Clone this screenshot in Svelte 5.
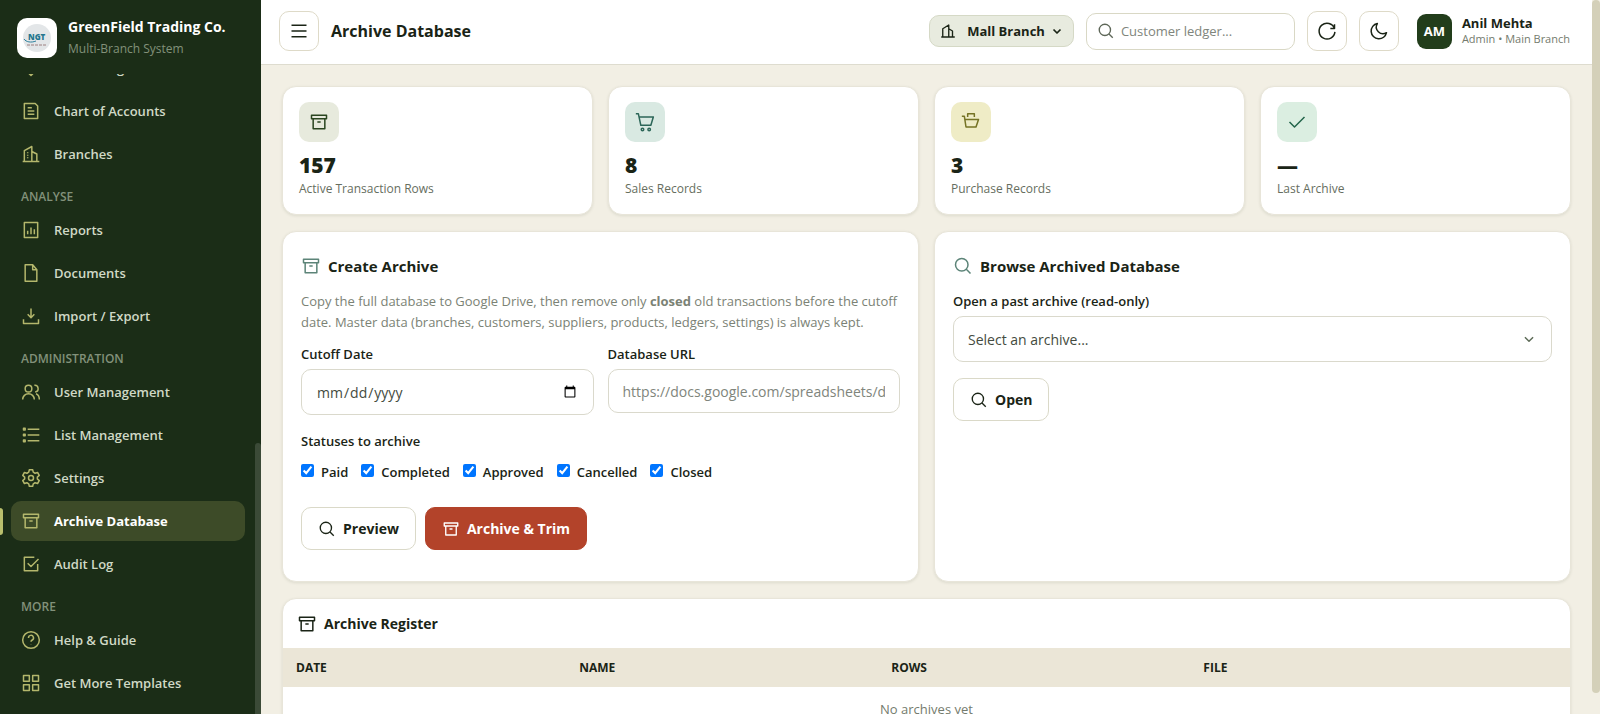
<script lang="ts">
	import { onMount } from 'svelte';

	type NavItem = { label: string; icon: string; active?: boolean };
	type NavGroup = { title?: string; items: NavItem[] };

	// 24x24 line icons, one path string each
	const icons: Record<string, string> = {
		pin: 'M12 21l-6-6a8 8 0 1 1 12 0z',
		article: 'M4 3h13l3 3v15H4zM8 8h5M8 12h8M8 16h8',
		building: 'M2 21h20M4 21V8l9-5v18M13 9l6 3v9M8 10v1M8 13v1M8 16v1',
		chart: 'M4 3h16v18H4zM8 13v4M12 9v8M16 11v6',
		file: 'M5 2h9l5 6v14H5zM14 2v6h5',
		download: 'M12 3v11M8 10l4 4 4-4M3 16v5h18v-5',
		users: 'M9 12a4 4 0 1 0 0-8 4 4 0 0 0 0 8zM2 21a7 7 0 0 1 14 0M16 4a4 4 0 0 1 1 8M18 14c3 1 4 4 4 7',
		list: 'M8 5h14M8 12h14M8 19h14M3 4h2v2H3zM3 11h2v2H3zM3 18h2v2H3z',
		gear: 'M10 2h4l.7 3 2.2 1.3 3-.9 2 3.4-2.3 2.1v2.2l2.3 2.1-2 3.4-3-.9-2.2 1.3-.7 3h-4l-.7-3-2.2-1.3-3 .9-2-3.4 2.3-2.1v-2.2L2.1 8.8l2-3.4 3 .9L9.3 5zM12 15a3 3 0 1 0 0-6 3 3 0 0 0 0 6z',
		archive: 'M3 4h18v4H3zM5 8v12h14V8M10 12h4',
		check: 'M20 12v8H4V4h12M8 11l4 4 9-9',
		help: 'M12 22a10 10 0 1 0 0-20 10 10 0 0 0 0 20zM9 9.5a3 3 0 1 1 4.5 2.5c-1 .6-1.500 1-1.500 2M12 17v.5',
		grid: 'M3 3h7v7H3zM14 3h7v7h-7zM3 14h7v7H3zM14 14h7v7h-7z',
		menu: 'M3 5h18M3 12h18M3 19h18',
		branch: 'M3 20h18M5 20V9l8-5v16M13 9l5 3v8',
		chevron: 'M5 9l7 7 7-7',
		search: 'M10.5 18a7.5 7.5 0 1 0 0-15 7.5 7.5 0 0 0 0 15zM16 16l5 5',
		refresh: 'M21 4v5h-5M21 9a9.5 9.5 0 1 0 .5 4',
		moon: 'M10 3a8 8 0 0 0 11 11A9.3 9.3 0 1 1 10 3z',
		cart: 'M1 2h3l3 14h12l3-10H5M9 19.5a1.5 1.5 0 1 0 0 3 1.5 1.5 0 0 0 0-3M17 19.5a1.5 1.5 0 1 0 0 3 1.5 1.5 0 0 0 0-3',
		basket: 'M1 5h3l2 13h12l3-9H5M8 6V2h8v4',
		tick: 'M3 12l6 6L21 6'
	};

	const groups: NavGroup[] = [
		{
			items: [
				{ label: 'Accounting', icon: 'pin' },
				{ label: 'Chart of Accounts', icon: 'article' },
				{ label: 'Branches', icon: 'building' }
			]
		},
		{
			title: 'Analyse',
			items: [
				{ label: 'Reports', icon: 'chart' },
				{ label: 'Documents', icon: 'file' },
				{ label: 'Import / Export', icon: 'download' }
			]
		},
		{
			title: 'Administration',
			items: [
				{ label: 'User Management', icon: 'users' },
				{ label: 'List Management', icon: 'list' },
				{ label: 'Settings', icon: 'gear' },
				{ label: 'Archive Database', icon: 'archive', active: true },
				{ label: 'Audit Log', icon: 'check' }
			]
		},
		{
			title: 'More',
			items: [
				{ label: 'Help & Guide', icon: 'help' },
				{ label: 'Get More Templates', icon: 'grid' }
			]
		}
	];

	const stats = [
		{ value: '157', label: 'Active Transaction Rows', icon: 'archive', tone: 'olive' },
		{ value: '8', label: 'Sales Records', icon: 'cart', tone: 'teal' },
		{ value: '3', label: 'Purchase Records', icon: 'basket', tone: 'yellow' },
		{ value: '—', label: 'Last Archive', icon: 'tick', tone: 'green' }
	];

	let statuses = $state([
		{ name: 'Paid', on: true },
		{ name: 'Completed', on: true },
		{ name: 'Approved', on: true },
		{ name: 'Cancelled', on: true },
		{ name: 'Closed', on: true }
	]);

	let nav: HTMLElement;

	// keep the lower groups in view, the active page is down there
	onMount(() => {
		nav.scrollTop = nav.scrollHeight;
	});
</script>

{#snippet icon(name: string, size: number)}
	<svg class="icon" width={size} height={size} viewBox="0 0 24 24" aria-hidden="true">
		<path d={icons[name]} />
	</svg>
{/snippet}

<div class="app">
	<aside class="sidebar">
		<div class="brand">
			<svg class="logo" width="40" height="40" viewBox="0 0 40 40" aria-hidden="true">
				<rect width="40" height="40" rx="10" fill="#fff" />
				<circle cx="20" cy="20" r="14" fill="#e3e6e8" />
				<text x="11" y="22">NGT</text>
				<path d="M7 21c2 3 7 4 12 2" fill="none" stroke="#2b7f9b" />
				<path d="M10 27h20" stroke="#8a6464" stroke-width="0.8" stroke-dasharray="3 1" />
			</svg>
			<div>
				<div class="brand-name">GreenField Trading Co.</div>
				<div class="brand-sub">Multi-Branch System</div>
			</div>
		</div>
		<nav bind:this={nav}>
			{#each groups as group}
				{#if group.title}
					<div class="group-title">{group.title}</div>
				{/if}
				{#each group.items as item}
					<a href="#top" class="nav-item" class:active={item.active}>
						{@render icon(item.icon, 20)}
						<span>{item.label}</span>
					</a>
				{/each}
			{/each}
		</nav>
		<div class="nav-thumb"></div>
	</aside>

	<div class="main">
		<header>
			<button class="square-btn" aria-label="Toggle menu">{@render icon('menu', 20)}</button>
			<h1>Archive Database</h1>
			<button class="branch-btn">
				{@render icon('branch', 18)}
				<span>Mall Branch</span>
				{@render icon('chevron', 12)}
			</button>
			<label class="search">
				{@render icon('search', 18)}
				<input type="text" placeholder="Customer ledger..." aria-label="Search" />
			</label>
			<button class="square-btn" aria-label="Refresh">{@render icon('refresh', 20)}</button>
			<button class="square-btn" aria-label="Dark mode">{@render icon('moon', 20)}</button>
			<div class="user">
				<div class="avatar">AM</div>
				<div>
					<div class="user-name">Anil Mehta</div>
					<div class="user-role">Admin • Main Branch</div>
				</div>
			</div>
		</header>

		<main>
			<section class="stats">
				{#each stats as stat}
					<div class="card stat">
						<div class="stat-icon {stat.tone}">{@render icon(stat.icon, 20)}</div>
						<div class="stat-value">{stat.value}</div>
						<div class="stat-label">{stat.label}</div>
					</div>
				{/each}
			</section>

			<section class="panels">
				<div class="card panel">
					<h2>{@render icon('archive', 20)} Create Archive</h2>
					<p>
						Copy the full database to Google Drive, then remove only <strong>closed</strong> old transactions
						before the cutoff date. Master data (branches, customers, suppliers, products, ledgers, settings)
						is always kept.
					</p>
					<div class="fields">
						<div>
							<label class="field-label" for="cutoff">Cutoff Date</label>
							<input id="cutoff" class="field date" type="date" />
						</div>
						<div>
							<label class="field-label" for="url">Database URL</label>
							<input id="url" class="field" type="text" placeholder="https://docs.google.com/spreadsheets/d/..." />
						</div>
					</div>
					<div class="status-title">Statuses to archive</div>
					<div class="statuses">
						{#each statuses as status}
							<label><input type="checkbox" bind:checked={status.on} /> {status.name}</label>
						{/each}
					</div>
					<div class="actions">
						<button class="btn">{@render icon('search', 18)} Preview</button>
						<button class="btn danger">{@render icon('archive', 18)} Archive &amp; Trim</button>
					</div>
				</div>

				<div class="card panel">
					<h2>{@render icon('search', 20)} Browse Archived Database</h2>
					<label class="field-label" for="past">Open a past archive (read-only)</label>
					<div class="select-wrap">
						<select id="past" class="field">
							<option>Select an archive...</option>
						</select>
						{@render icon('chevron', 14)}
					</div>
					<button class="btn">{@render icon('search', 18)} Open</button>
				</div>
			</section>

			<section class="card register">
				<h2>{@render icon('archive', 20)} Archive Register</h2>
				<table>
					<thead>
						<tr><th>Date</th><th>Name</th><th>Rows</th><th>File</th></tr>
					</thead>
					<tbody>
						<tr><td colspan="4">No archives yet</td></tr>
					</tbody>
				</table>
			</section>
		</main>
	</div>
	<div class="page-rail"><div class="page-thumb"></div></div>
</div>

<style>
	:global(body) {
		background: #f2efe4;
	}

	.app {
		display: flex;
		height: 100vh;
		overflow: hidden;
		font-family: 'Segoe UI', 'Open Sans', 'Noto Sans', sans-serif;
		font-size: 14px;
		color: #1a2416;
	}

	.app * {
		box-sizing: border-box;
	}

	button,
	input,
	select {
		font: inherit;
		color: inherit;
	}

	button {
		cursor: pointer;
	}

	.icon {
		flex: none;
		fill: none;
		stroke: currentColor;
		stroke-width: 1.8;
		stroke-linejoin: round;
	}

	/* Sidebar */
	.sidebar {
		position: relative;
		display: flex;
		flex-direction: column;
		flex: none;
		width: 261px;
		background: #1b2d17;
	}

	.brand {
		display: flex;
		align-items: center;
		gap: 11px;
		height: 74px;
		padding: 2px 17px 0;
		flex: none;
	}

	.logo text {
		font-size: 8px;
		font-weight: 800;
		fill: #24768f;
	}

	.brand-name {
		font-size: 14px;
		font-weight: 700;
		line-height: 22px;
		color: #fff;
		white-space: nowrap;
	}

	.brand-sub {
		font-size: 12px;
		line-height: 22px;
		color: #82917a;
	}

	nav {
		position: relative;
		flex: 1;
		min-height: 0;
		overflow-y: auto;
		scrollbar-width: none;
		padding: 0 16px 8px 11px;
	}

	.group-title {
		padding: 11px 10px 4px;
		font-size: 12px;
		line-height: 18px;
		font-weight: 600;
		text-transform: uppercase;
		color: #82917a;
	}

	.nav-item {
		display: flex;
		align-items: center;
		gap: 13px;
		height: 40px;
		margin-bottom: 3px;
		padding: 0 10px;
		border-radius: 10px;
		font-size: 13px;
		font-weight: 600;
		color: #d0d9c6;
		text-decoration: none;
	}

	.nav-item .icon {
		color: #b4b76c;
	}

	.nav-item.active {
		color: #fff;
		font-weight: 700;
		background: #3d4b28;
	}

	.nav-item.active::before {
		content: '';
		position: absolute;
		left: 0;
		width: 3px;
		height: 27px;
		border-radius: 0 3px 3px 0;
		background: #b9bf6d;
	}

	.nav-thumb {
		position: absolute;
		right: 0;
		top: 62%;
		bottom: 0;
		width: 6px;
		border-radius: 3px 3px 0 0;
		background: #3b4a37;
	}

	/* Top bar */
	.main {
		flex: 1;
		min-width: 0;
		display: flex;
		flex-direction: column;
	}

	header {
		display: flex;
		align-items: center;
		gap: 12px;
		flex: none;
		height: 65px;
		padding: 0 22px 2px 18px;
		background: #fff;
		border-bottom: 1px solid #dedccf;
	}

	h1 {
		flex: 1;
		margin: 0;
		font-size: 16px;
		font-weight: 700;
	}

	.square-btn {
		display: grid;
		place-items: center;
		width: 40px;
		height: 40px;
		padding: 0;
		border: 1px solid #dedac8;
		border-radius: 10px;
		background: #fff;
	}

	.branch-btn {
		display: flex;
		align-items: center;
		gap: 6px;
		height: 32px;
		padding: 0 10px 0 9px;
		border: 1px solid #d5d9c6;
		border-radius: 10px;
		background: #e8ebdf;
		font-size: 13px;
		font-weight: 700;
	}

	.branch-btn span {
		margin-left: 4px;
	}

	.branch-btn .icon:last-child {
		stroke-width: 3.5;
	}

	.search {
		display: flex;
		align-items: center;
		gap: 6px;
		width: 209px;
		height: 37px;
		padding: 0 10px;
		border: 1px solid #d9d8c5;
		border-radius: 10px;
		color: #5d6657;
	}

	.search input {
		flex: 1;
		min-width: 0;
		padding: 0;
		border: 0;
		outline: 0;
		font-size: 13px;
		background: none;
	}

	input::placeholder {
		color: #80857c;
	}

	.user {
		display: flex;
		align-items: center;
		gap: 10px;
		margin-left: 6px;
	}

	.avatar {
		display: grid;
		place-items: center;
		width: 35px;
		height: 35px;
		border-radius: 9px;
		background: #223d1b;
		color: #fff;
		font-size: 13px;
		font-weight: 700;
	}

	.user-name {
		font-size: 13px;
		line-height: 16px;
		font-weight: 700;
	}

	.user-role {
		font-size: 11px;
		line-height: 16px;
		color: #747b6d;
	}

	/* Content */
	main {
		flex: 1;
		min-height: 0;
		overflow-y: auto;
		scrollbar-width: none;
		padding: 21px;
	}

	.card {
		background: #fff;
		border: 1px solid #e8e5d9;
		border-radius: 14px;
		box-shadow: 0 1px 3px rgba(40, 45, 20, 0.1);
	}

	.stats {
		display: grid;
		grid-template-columns: repeat(4, 1fr);
		gap: 15px;
	}

	.stat {
		padding: 15px 16px;
	}

	.stat-icon {
		display: grid;
		place-items: center;
		width: 40px;
		height: 40px;
		border-radius: 10px;
	}

	.olive {
		color: #2a4520;
		background: #e7eadd;
	}
	.teal {
		color: #2c6658;
		background: #d9e9e2;
	}
	.yellow {
		color: #757325;
		background: #efecc6;
	}
	.green {
		color: #23644a;
		background: #dbeee1;
	}

	.stat-value {
		margin-top: 9px;
		font-size: 21px;
		line-height: 28px;
		font-weight: 800;
	}

	.stat-label {
		font-size: 12px;
		line-height: 20px;
		color: #666e60;
	}

	.panels {
		display: grid;
		grid-template-columns: 1fr 1fr;
		gap: 15px;
		margin: 16px 0;
	}

	.panel {
		padding: 18px;
		padding-bottom: 31px;
	}

	h2 {
		display: flex;
		align-items: center;
		gap: 7px;
		margin: 0;
		font-size: 15px;
		line-height: 32px;
		font-weight: 700;
	}

	.panel h2 .icon {
		color: #5c8478;
	}

	.panel p {
		margin: 9px 0 12px;
		font-size: 13px;
		line-height: 21px;
		color: #7b8275;
	}

	.fields {
		display: grid;
		grid-template-columns: 1fr 1fr;
		align-items: start;
		gap: 14px;
	}

	.field-label,
	.status-title {
		display: block;
		font-size: 13px;
		line-height: 18px;
		font-weight: 600;
	}

	.field-label {
		margin-bottom: 6px;
	}

	.panel > .field-label {
		margin-top: 10px;
	}

	.field {
		display: block;
		width: 100%;
		height: 44px;
		padding: 0 14px;
		border: 1px solid #dad9cc;
		border-radius: 10px;
		background: #fff;
		font-size: 14px;
		color: #444b40;
	}

	.date,
	select.field {
		height: 46px;
	}

	.status-title {
		margin-top: 17px;
	}

	.statuses {
		display: flex;
		flex-wrap: wrap;
		gap: 13px;
		margin-top: 13px;
		font-size: 13px;
		line-height: 18px;
		font-weight: 600;
	}

	.statuses label {
		display: flex;
		align-items: center;
		gap: 7px;
	}

	.statuses input {
		width: 13px;
		height: 13px;
		margin: 0 0 3px;
	}

	.actions {
		display: flex;
		gap: 9px;
		margin-top: 26px;
	}

	.btn {
		display: inline-flex;
		align-items: center;
		gap: 7px;
		height: 43px;
		padding: 0 16px;
		border: 1px solid #dad9c8;
		border-radius: 10px;
		background: #fff;
		font-size: 14px;
		font-weight: 700;
	}

	.danger {
		border-color: #b3432a;
		background: #b3432a;
		color: #fff;
	}

	.select-wrap {
		position: relative;
		margin-bottom: 16px;
	}

	.select-wrap select {
		appearance: none;
	}

	.select-wrap .icon {
		position: absolute;
		top: 16px;
		right: 16px;
		stroke-width: 2.5;
		color: #5d6b57;
		pointer-events: none;
	}

	.register {
		overflow: hidden;
	}

	.register h2 {
		height: 49px;
		padding: 0 14px;
		font-size: 14px;
	}

	table {
		width: 100%;
		table-layout: fixed;
		border-collapse: collapse;
	}

	th {
		height: 39px;
		padding: 0 13px;
		font-size: 12px;
		font-weight: 700;
		text-align: left;
		text-transform: uppercase;
		background: #ebe6d7;
	}

	th:first-child {
		width: 22%;
	}
	th:last-child {
		width: 29.5%;
	}

	td {
		padding: 13px;
		font-size: 13px;
		line-height: 18px;
		text-align: center;
		color: #747b6d;
	}

	.page-rail {
		flex: none;
		width: 8px;
		background: #f2efe4;
	}

	.page-thumb {
		height: 97%;
		border-radius: 4px;
		background: #d4d0b9;
	}
</style>
